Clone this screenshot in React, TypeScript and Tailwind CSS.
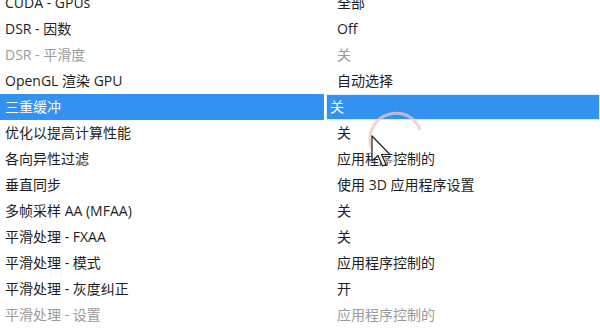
const rows: { name: string; value: string; dim?: boolean; selected?: boolean }[] = [
  { name: "CUDA - GPUs", value: "全部" },
  { name: "DSR - 因数", value: "Off" },
  { name: "DSR - 平滑度", value: "关", dim: true },
  { name: "OpenGL 渲染 GPU", value: "自动选择" },
  { name: "三重缓冲", value: "关", selected: true },
  { name: "优化以提高计算性能", value: "关" },
  { name: "各向异性过滤", value: "应用程序控制的" },
  { name: "垂直同步", value: "使用 3D 应用程序设置" },
  { name: "多帧采样 AA (MFAA)", value: "关" },
  { name: "平滑处理 - FXAA", value: "关" },
  { name: "平滑处理 - 模式", value: "应用程序控制的" },
  { name: "平滑处理 - 灰度纠正", value: "开" },
  { name: "平滑处理 - 设置", value: "应用程序控制的", dim: true },
];

function Row({ name, value, dim, selected }: (typeof rows)[number]) {
  if (selected) {
    return (
      <div className="flex h-[26px] bg-white">
        <div className="flex w-[324px] items-center bg-[#3391ef] pl-[5px] text-white">
          {name}
        </div>
        <div className="ml-[2px] flex flex-1 items-center border border-[#d8ecff] bg-[#3391ef] pl-[3px] text-white">
          {value}
        </div>
      </div>
    );
  }
  return (
    <div className={`flex h-[26px] items-center ${dim ? "text-[#9a9a9a]" : "text-[#1e1e1e]"}`}>
      <div className="w-[337px] pl-[5px]">{name}</div>
      <div className="flex-1">{value}</div>
    </div>
  );
}

export default function App() {
  return (
    <div
      className="relative h-[333px] w-[600px] overflow-hidden bg-white text-[14px] leading-none"
      style={{ fontFamily: '"Open Sans", "Noto Sans CJK SC", sans-serif' }}
    >
      <div className="-mt-[10px] flex flex-col">
        {rows.map((r) => (
          <Row key={r.name} {...r} />
        ))}
      </div>

      {/* click ripple */}
      <svg className="absolute left-[362px] top-[104px]" width="70" height="60" viewBox="0 0 70 60">
        <path
          d="M10 46 C4 30 12 14 28 10 C42 7 54 14 58 26"
          fill="none"
          stroke="#f3c4c4"
          strokeWidth="3"
          opacity="0.75"
        />
        <path d="M14 50 C20 56 28 58 34 56" fill="none" stroke="#f6d2d2" strokeWidth="3" opacity="0.6" />
      </svg>

      {/* mouse cursor */}
      <svg className="absolute left-[371px] top-[135px]" width="24" height="34" viewBox="0 0 24 34">
        <path
          d="M1 1 L1 26 L7 20.5 L11.5 31 L15 29.5 L10.5 19.5 L19 19.5 Z"
          fill="#fff"
          stroke="#222"
          strokeWidth="1.2"
          strokeLinejoin="round"
        />
      </svg>
    </div>
  );
}
